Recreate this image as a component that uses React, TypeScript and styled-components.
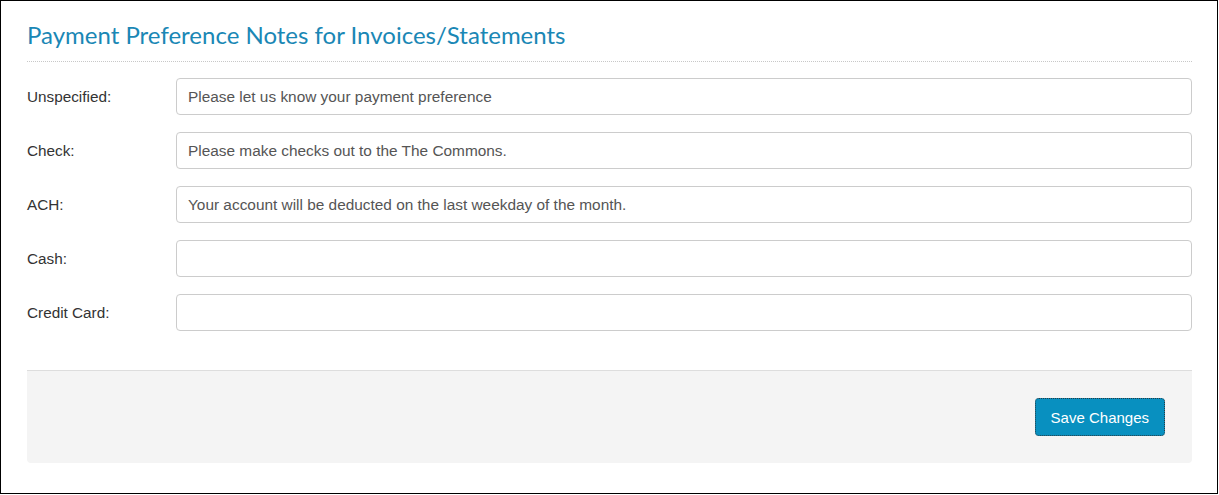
import styled, { createGlobalStyle } from "styled-components";

const GlobalStyle = createGlobalStyle`
  body {
    margin: 0;
    background: #fff;
    font-family: "Liberation Sans", Arial, sans-serif;
  }
`;

interface NoteRow {
  label: string;
  value: string;
}

const rows: NoteRow[] = [
  { label: "Unspecified:", value: "Please let us know your payment preference" },
  { label: "Check:", value: "Please make checks out to the The Commons." },
  { label: "ACH:", value: "Your account will be deducted on the last weekday of the month." },
  { label: "Cash:", value: "" },
  { label: "Credit Card:", value: "" },
];

const Frame = styled.div`
  width: 1218px;
  height: 494px;
  box-sizing: border-box;
  border: 1px solid #000;
  padding: 0 25px 0 26px;
`;

const Title = styled.h2`
  margin: 0;
  padding: 20px 0 12px;
  font-family: Lato, "Open Sans", sans-serif;
  font-weight: 400;
  font-size: 24px;
  line-height: 28px;
  color: #1a87b5;
  border-bottom: 1px dotted #c8c8c8;
`;

const Form = styled.div`
  display: flex;
  flex-direction: column;
  gap: 17px;
  padding-top: 16px;
`;

const Row = styled.div`
  display: flex;
  align-items: center;
`;

const Label = styled.label`
  width: 149px;
  flex-shrink: 0;
  font-size: 15.3px;
  color: #333;
`;

const Input = styled.input`
  flex: 1;
  height: 37px;
  box-sizing: border-box;
  border: 1px solid #ccc;
  border-radius: 4px;
  padding: 0 11px;
  font-family: "Liberation Sans", Arial, sans-serif;
  font-size: 15.4px;
  color: #555;
  outline: none;
`;

const Footer = styled.div`
  margin-top: 39px;
  height: 93px;
  box-sizing: border-box;
  background: #f4f4f4;
  border-top: 1px solid #ddd;
  border-radius: 0 0 4px 4px;
  display: flex;
  justify-content: flex-end;
  align-items: center;
  padding: 0 27px;
`;

const SaveButton = styled.button`
  height: 38px;
  padding: 0 15px;
  background: #0890c0;
  border: 1px dotted #2a3a42;
  border-radius: 4px;
  color: #fff;
  font-family: "Liberation Sans", Arial, sans-serif;
  font-size: 15px;
  cursor: pointer;
`;

const App: React.FC = () => {
  return (
    <>
      <GlobalStyle />
      <Frame>
        <Title>Payment Preference Notes for Invoices/Statements</Title>
        <Form>
          {rows.map((row) => (
            <Row key={row.label}>
              <Label>{row.label}</Label>
              <Input defaultValue={row.value} />
            </Row>
          ))}
        </Form>
        <Footer>
          <SaveButton>Save Changes</SaveButton>
        </Footer>
      </Frame>
    </>
  );
};

export default App;
